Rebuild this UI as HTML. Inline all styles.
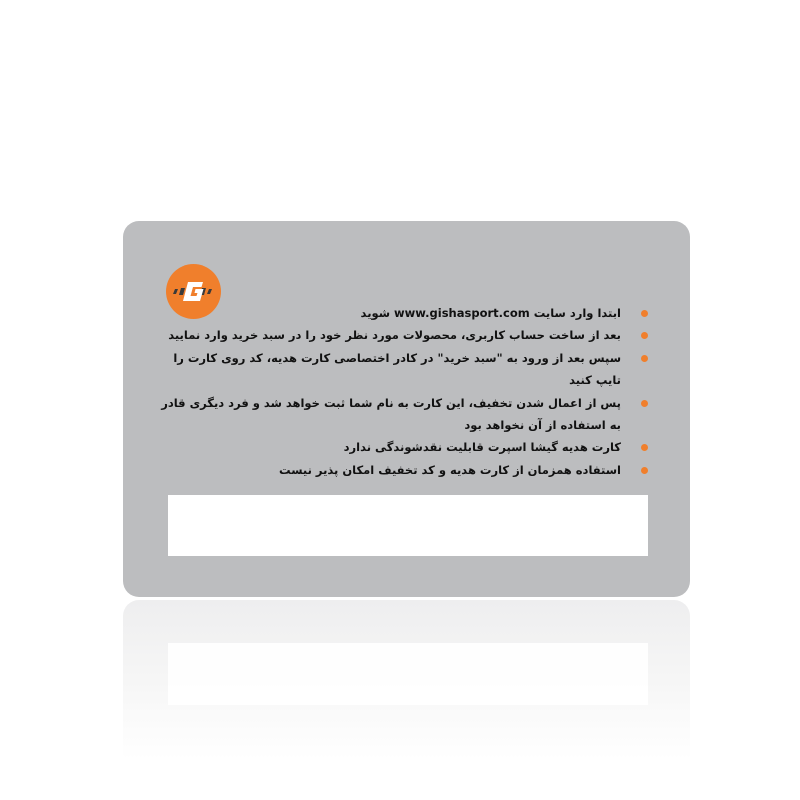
<!DOCTYPE html>
<html><head><meta charset="utf-8"><style>
body{margin:0;width:800px;height:800px;background:#fff;position:relative;overflow:hidden;font-family:"DejaVu Sans",sans-serif}
.card{position:absolute;left:123px;top:221px;width:567px;height:376px;background:#bcbdbf;border-radius:16px}
.box{position:absolute;left:45px;top:274px;width:480px;height:61px;background:#fff}
.refl{position:absolute;left:123px;top:600px;width:567px;height:200px;border-radius:16px 16px 0 0;background:linear-gradient(#eeeeef,#f6f6f6 40%,#fff 80%)}
.refl .b2{position:absolute;left:45px;top:43px;width:480px;height:62px;background:#fff;opacity:.9}
.logo{position:absolute;left:166px;top:264px;width:55px;height:55px;border-radius:50%;background:#f07f2c}
ul{position:absolute;right:157px;top:302px;margin:0;padding:0;list-style:none;direction:rtl;width:500px;font-size:11.5px;font-weight:bold;color:#111;line-height:22.4px;white-space:nowrap}
li{position:relative;padding-right:22px}
li:before{content:"";position:absolute;right:-5px;top:8px;width:7px;height:7px;border-radius:50%;background:#f07f2c}
</style></head><body>
<div class="card"><div class="box"></div></div>
<div class="logo"><svg width="55" height="55" viewBox="0 0 55 55"><path d="M15 24h4l-2 7h-4zM9 25h3l-2 5H7z" fill="#3a3a3a"/><path d="M36 24h4l-2 7h-4zM43 25h3l-2 5h-3z" fill="#3a3a3a"/><path d="M22 18h15l-1.5 5H27l-2.5 9h6l1-3h-3l1-4h8l-3.5 12H17z" fill="#fff"/></svg></div>
<ul>
<li>ابتدا وارد سایت www.gishasport.com شوید</li>
<li>بعد از ساخت حساب کاربری، محصولات مورد نظر خود را در سبد خرید وارد نمایید</li>
<li>سپس بعد از ورود به "سبد خرید" در کادر اختصاصی کارت هدیه، کد روی کارت را<br>تایپ کنید</li>
<li>پس از اعمال شدن تخفیف، این کارت به نام شما ثبت خواهد شد و فرد دیگری قادر<br>به استفاده از آن نخواهد بود</li>
<li>کارت هدیه گیشا اسپرت قابلیت نقدشوندگی ندارد</li>
<li>استفاده همزمان از کارت هدیه و کد تخفیف امکان پذیر نیست</li>
</ul>
<div class="refl"><div class="b2"></div></div>
</body></html>
